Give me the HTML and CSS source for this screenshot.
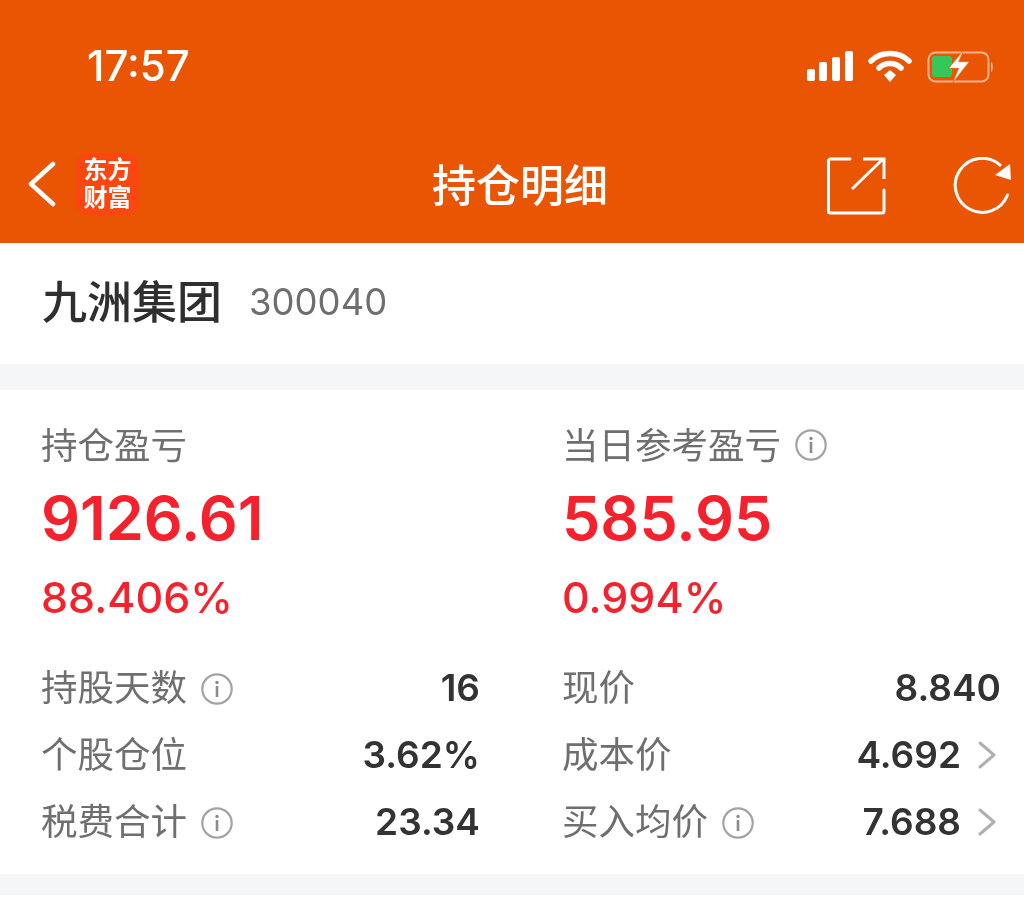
FILE: index.html
```html
<!DOCTYPE html>
<html lang="zh-CN">
<head>
<meta charset="utf-8">
<title>持仓明细</title>
<link rel="stylesheet" href="styles.css">
</head>
<body>
<svg class="defs" width="0" height="0" aria-hidden="true">
  <symbol id="info" viewBox="0 0 32 32">
    <circle cx="16" cy="16" r="14.7" fill="none" stroke="#a3a3a3" stroke-width="2.2"/>
    <circle cx="16" cy="9.5" r="1.7" fill="#8c8c8c"/>
    <rect x="14.7" y="13" width="2.6" height="11" fill="#8c8c8c"/>
  </symbol>
  <symbol id="chev" viewBox="0 0 18 28">
    <path d="M2 2 L16 14 L2 26" fill="none" stroke="#b0b0b0" stroke-width="3" stroke-linecap="round" stroke-linejoin="round"/>
  </symbol>
</svg>

<header class="top">
  <div class="status">
    <span class="time">17:57</span>
    <div class="status-icons">
      <svg width="46" height="30" viewBox="0 0 46 30"><rect x="0" y="18" width="8" height="12" rx="2" fill="#fff"/><rect x="12" y="11" width="8" height="19" rx="2" fill="#fff"/><rect x="25" y="6" width="8" height="24" rx="2" fill="#fff"/><rect x="38" y="0" width="8" height="30" rx="2" fill="#fff"/></svg>
      <svg width="44" height="32" viewBox="0 0 44 32"><path d="M3 11 C13 1 31 1 41 11" fill="none" stroke="#fff" stroke-width="5.5" stroke-linecap="round"/><path d="M11 18 C17 12 27 12 33 18" fill="none" stroke="#fff" stroke-width="5.5" stroke-linecap="round"/><path d="M16 25 L22 20 L28 25 L22 32 Z" fill="#fff"/></svg>
      <svg width="68" height="33" viewBox="0 0 68 33"><rect x="1.5" y="2.5" width="60" height="29" rx="7" fill="none" stroke="#fff" stroke-opacity=".55" stroke-width="2"/><path d="M64 12 C66.500 13 66.500 21 64 22 Z" fill="#fff" fill-opacity=".55"/><rect x="5" y="6" width="20" height="21" rx="3" fill="#34c759"/><path d="M36.700 0 L21.700 18.300 L31.700 18.300 L25.700 32.700 L42.300 11.700 L31.700 11.700 Z" fill="#fff" stroke="#ea5504" stroke-width="0.6"/></svg>
    </div>
  </div>
  <nav class="nav">
    <div class="nav-left">
      <svg class="back" width="28" height="46" viewBox="0 0 28 46"><path d="M25 3 L3 23 L25 43" fill="none" stroke="#fff" stroke-width="4.500" stroke-linecap="round" stroke-linejoin="round"/></svg>
      <div class="logo"><span>东方</span><span>财富</span></div>
    </div>
    <h1 class="title">持仓明细</h1>
    <div class="nav-right">
      <svg width="59" height="58" viewBox="0 0 59 58"><path d="M23 2 H3.500 A2 2 0 0 0 1.500 4 V54 A2 2 0 0 0 3.500 56 H55 A2 2 0 0 0 57 54 V33" fill="none" stroke="#fff" stroke-width="3" stroke-linecap="round"/><path d="M25 32 L56 2 M36 2 H57 V22" fill="none" stroke="#fff" stroke-width="3"/></svg>
      <svg width="60" height="58" viewBox="0 0 60 58"><path d="M55.500 38 A27 27 0 1 1 48 8" fill="none" stroke="#fff" stroke-width="3" stroke-linecap="round"/><path d="M58 7 L59 23 L43 18 Z" fill="#fff"/></svg>
    </div>
  </nav>
</header>

<main>
  <section class="stock">
    <span class="stock-name">九洲集团</span>
    <span class="stock-code">300040</span>
  </section>

  <section class="card">
    <div class="summary">
      <div class="sum-col">
        <div class="label">持仓盈亏</div>
        <div class="big">9126.61</div>
        <div class="pct">88.406%</div>
      </div>
      <div class="sum-col">
        <div class="label">当日参考盈亏<svg class="info"><use href="#info"/></svg></div>
        <div class="big">585.95</div>
        <div class="pct">0.994%</div>
      </div>
    </div>
    <div class="rows">
      <div class="row"><span class="label">持股天数<svg class="info"><use href="#info"/></svg></span><span class="val">16</span></div>
      <div class="row"><span class="label">现价</span><span class="val">8.840</span></div>
      <div class="row"><span class="label">个股仓位</span><span class="val">3.62%</span></div>
      <div class="row"><span class="label">成本价</span><span class="val with-chev">4.692<svg class="chev"><use href="#chev"/></svg></span></div>
      <div class="row"><span class="label">税费合计<svg class="info"><use href="#info"/></svg></span><span class="val">23.34</span></div>
      <div class="row"><span class="label">买入均价<svg class="info"><use href="#info"/></svg></span><span class="val with-chev">7.688<svg class="chev"><use href="#chev"/></svg></span></div>
    </div>
  </section>

  <div class="foot"></div>
</main>
</body>
</html>
```

FILE: styles.css
```css
* { box-sizing: border-box; }
html, body { margin: 0; padding: 0; }
body {
  width: 1024px;
  height: 919px;
  overflow: hidden;
  background: #f5f6f8;
  font-family: "Liberation Sans", "Noto Sans CJK SC", sans-serif;
  filter: blur(0.6px);
}
.defs { position: absolute; }

.top { height: 243px; background: #ea5504; color: #fff; }
.status {
  height: 132px;
  padding: 0 29px 0 87px;
  display: flex;
  align-items: center;
  justify-content: space-between;
}
.time { font: 500 42px/1 Inter, sans-serif; }
.status-icons { display: flex; align-items: center; gap: 15px; }

.nav {
  height: 111px;
  padding: 0 12px 4px 28px;
  display: grid;
  grid-template-columns: 1fr auto 1fr;
  align-items: center;
}
.nav-left { display: flex; align-items: center; gap: 20px; }
.back { margin-bottom: 4px; }
.logo {
  width: 63px;
  height: 62px;
  margin-bottom: 3px;
  padding-bottom: 4px;
  background: #fa4610;
  border-radius: 12px;
  display: flex;
  flex-direction: column;
  align-items: center;
  justify-content: center;
  font: 700 24px/28px "Noto Sans CJK SC", sans-serif;
  color: #fff;
}
.title { margin: 0; padding-bottom: 6px; font: 500 44px/1 "Noto Sans CJK SC", sans-serif; }
.nav-right { display: flex; justify-content: flex-end; align-items: center; gap: 66px; }

.stock {
  height: 121px;
  background: #fff;
  padding: 0 0 8px 42px;
  display: flex;
  align-items: center;
  gap: 27px;
}
.stock-name { font: 500 45px/1 "Noto Sans CJK SC", sans-serif; color: #2f2f2f; }
.stock-code { margin-top: 6px; font: 400 36.5px/1 Inter, sans-serif; color: #6e6e6e; }

.card {
  margin-top: 26px;
  height: 484px;
  background: #fff;
  padding: 29px 23px 0 41px;
}
.summary, .rows {
  display: grid;
  grid-template-columns: 439px 439px;
  column-gap: 82px;
}
.label {
  font: 400 36.5px/50px "Noto Sans CJK SC", sans-serif;
  color: #6f6f6f;
  display: flex;
  align-items: center;
}
.info { width: 32px; height: 32px; margin: 6px 0 0 14px; flex: none; }
.sum-col .info { margin-top: 2px; }
.big {
  margin-top: 1px;
  font: 600 61px/96px Inter, sans-serif;
  color: #f5222d;
}
.pct {
  font: 500 43px/62px Inter, sans-serif;
  color: #f5222d;
}
.rows { margin-top: 26px; }
.row {
  height: 67px;
  display: flex;
  align-items: center;
  justify-content: space-between;
}
.row .label { padding-bottom: 3px; }
.val { font: 600 37px/1 Inter, sans-serif; color: #333; display: flex; align-items: center; }
.with-chev { margin-right: 5px; }
.chev { width: 18px; height: 28px; margin-left: 17px; }
.foot { margin-top: 21px; height: 24px; background: #fff; }
```
